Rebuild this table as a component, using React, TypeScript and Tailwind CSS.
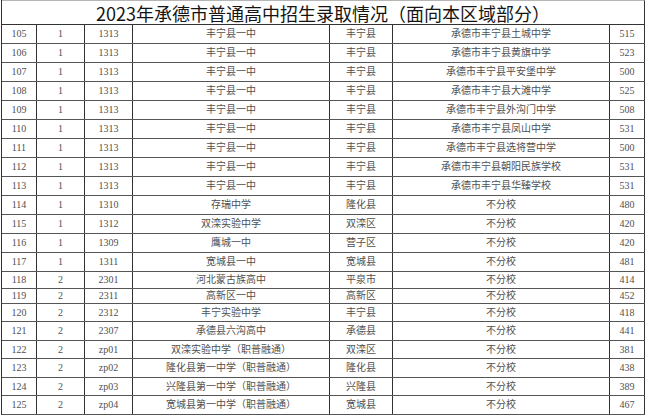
import React from "react";

type Row = [string, string, string, string, string, string, string, number];

const rows: Row[] = [
  ["105", "1", "1313", "丰宁县一中", "丰宁县", "承德市丰宁县土城中学", "515", 19],
  ["106", "1", "1313", "丰宁县一中", "丰宁县", "承德市丰宁县黄旗中学", "523", 19],
  ["107", "1", "1313", "丰宁县一中", "丰宁县", "承德市丰宁县平安堡中学", "500", 19],
  ["108", "1", "1313", "丰宁县一中", "丰宁县", "承德市丰宁县大滩中学", "525", 19],
  ["109", "1", "1313", "丰宁县一中", "丰宁县", "承德市丰宁县外沟门中学", "508", 19],
  ["110", "1", "1313", "丰宁县一中", "丰宁县", "承德市丰宁县凤山中学", "531", 19],
  ["111", "1", "1313", "丰宁县一中", "丰宁县", "承德市丰宁县选将营中学", "500", 19],
  ["112", "1", "1313", "丰宁县一中", "丰宁县", "承德市丰宁县朝阳民族学校", "531", 19],
  ["113", "1", "1313", "丰宁县一中", "丰宁县", "承德市丰宁县华臻学校", "531", 19],
  ["114", "1", "1310", "存瑞中学", "隆化县", "不分校", "480", 19],
  ["115", "1", "1312", "双滦实验中学", "双滦区", "不分校", "420", 19],
  ["116", "1", "1309", "鹰城一中", "营子区", "不分校", "420", 19],
  ["117", "1", "1311", "宽城县一中", "宽城县", "不分校", "481", 19],
  ["118", "2", "2301", "河北蒙古族高中", "平泉市", "不分校", "414", 17],
  ["119", "2", "2311", "高新区一中", "高新区", "不分校", "452", 15],
  ["120", "2", "2312", "丰宁实验中学", "丰宁县", "不分校", "418", 18],
  ["121", "2", "2307", "承德县六沟高中", "承德县", "不分校", "441", 19],
  ["122", "2", "zp01", "双滦实验中学（职普融通）", "双滦区", "不分校", "381", 18],
  ["123", "2", "zp02", "隆化县第一中学（职普融通）", "隆化县", "不分校", "438", 19],
  ["124", "2", "zp03", "兴隆县第一中学（职普融通）", "兴隆县", "不分校", "389", 18],
  ["125", "2", "zp04", "宽城县第一中学（职普融通）", "宽城县", "不分校", "467", 19],
];

const widths = ["w-[35px]", "w-[48px]", "w-[48px]", "w-[197px]", "w-[63px]", "w-[217px]", "w-[35px]"];

export default function App() {
  return (
    <div className="h-[417px] w-[648px] overflow-hidden bg-white">
      <div className="ml-[1px] w-[644px] border-l border-[#333]">
        <div className="flex h-[25px] items-center justify-center border-t border-b border-r border-t-[#b5b5b5] border-b-[#333] border-r-[#333] font-['Noto_Sans_CJK_SC',sans-serif] text-[18px] leading-none text-[#151515]">
          2023年承德市普通高中招生录取情况（面向本区域部分）
        </div>
        {rows.map((row) => (
          <div
            key={row[0]}
            className="flex border-b border-[#555]"
            style={{ height: row[7] }}
          >
            {row.slice(0, 7).map((cell, i) => (
              <div
                key={i}
                className={`${widths[i]} flex shrink-0 items-center justify-center overflow-hidden whitespace-nowrap border-r border-[#333] font-['Liberation_Serif','Noto_Sans_CJK_SC',serif] text-[10px] leading-none text-[#505050]`}
              >
                {cell}
              </div>
            ))}
          </div>
        ))}
      </div>
    </div>
  );
}
